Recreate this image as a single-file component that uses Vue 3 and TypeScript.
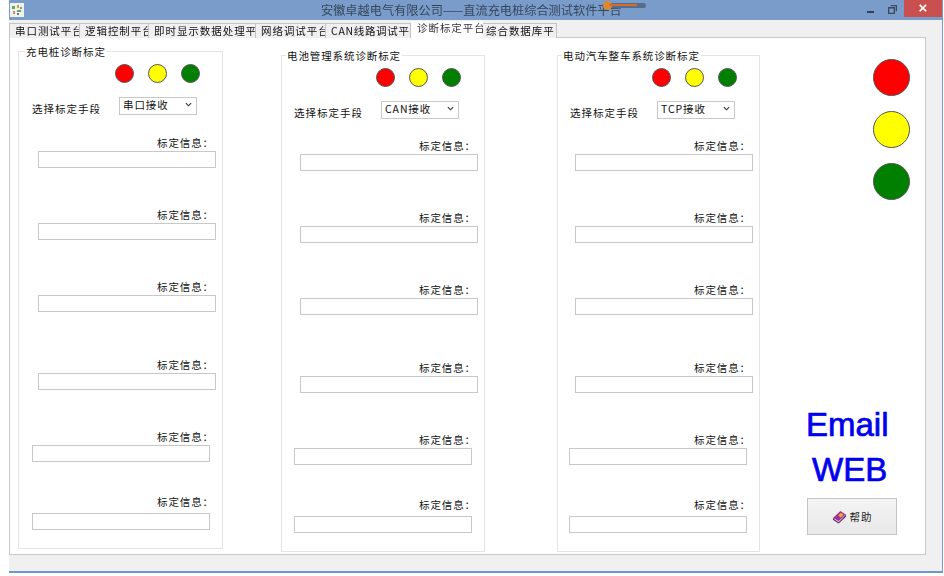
<script setup lang="ts">
interface Panel {
  title: string
  mode: string
  cls: string
}
const tabs = ['串口测试平台', '逻辑控制平台', '即时显示数据处理平台', '网络调试平台', 'CAN线路调试平台', '诊断标定平台', '综合数据库平台']
const panels: Panel[] = [
  { title: '充电桩诊断标定', mode: '串口接收', cls: 'p1' },
  { title: '电池管理系统诊断标定', mode: 'CAN接收', cls: 'p2' },
  { title: '电动汽车整车系统诊断标定', mode: 'TCP接收', cls: 'p3' },
]
const rows = [0, 1, 2, 3, 4, 5]
</script>

<template>
  <div class="page">
    <div class="window">
      <header class="titlebar">
        <svg class="appicon" viewBox="0 0 14 14" width="14" height="14">
          <rect width="14" height="14" fill="#eef3e8" />
          <rect x="2" y="3" width="3" height="3" fill="#6fa06f" />
          <rect x="7" y="2" width="2" height="3" fill="#c9a24a" />
          <rect x="10" y="4" width="2" height="2" fill="#7a93b8" />
          <rect x="3" y="8" width="2" height="3" fill="#c98a6f" />
          <rect x="7" y="7" width="4" height="2" fill="#6fa06f" />
          <rect x="7" y="10" width="2" height="2" fill="#777" />
        </svg>
        <span class="title">安徽卓越电气有限公司——直流充电桩综合测试软件平台</span>
        <div class="slider"><i class="knob"></i><i class="fill"></i></div>
        <div class="controls">
          <svg class="min" viewBox="0 0 7 2" width="7" height="2"><rect width="7" height="2" fill="#35404f" /></svg>
          <svg class="max" viewBox="0 0 10 10" width="9" height="9">
            <path d="M3 .7h6.3V7M.7 3h6.3v6.3H.7z" fill="none" stroke="#3f4a5a" stroke-width="1.5" />
          </svg>
          <div class="close">×</div>
        </div>
      </header>
      <div class="body">
        <nav class="tabs">
          <div v-for="(t, i) in tabs" :key="t" class="tab" :class="['t' + i, { active: i === 5 }]"><span>{{ t }}</span></div>
        </nav>
        <main class="pane">
          <section v-for="p in panels" :key="p.title" class="group" :class="p.cls">
            <div class="legend">{{ p.title }}</div>
            <div class="lights">
              <i class="dot red"></i><i class="dot yellow"></i><i class="dot green"></i>
            </div>
            <div class="mode">
              <span class="mode-label">选择标定手段</span>
              <div class="select"><span>{{ p.mode }}</span>
                <svg viewBox="0 0 8 5" width="7" height="5"><path d="M1 1l3 3 3-3" fill="none" stroke="#333" stroke-width="1.3" /></svg>
              </div>
            </div>
            <div class="rows">
              <div v-for="r in rows" :key="r" class="row" :class="'r' + r">
                <label>标定信息：</label>
                <div class="input"></div>
              </div>
            </div>
          </section>
          <aside class="side">
            <div class="big-lights">
              <i class="big red"></i><i class="big yellow"></i><i class="big green"></i>
            </div>
            <div class="link email">Email</div>
            <div class="link web">WEB</div>
            <button class="help">
              <svg viewBox="0 0 16 16" width="15" height="15">
                <path d="M1 9.5L9 2l6 4-8 7.5z" fill="#a0309c" />
                <path d="M1 9.5l6 4L15 6v2.2L7 15.5l-6-4z" fill="#5c1f6a" />
                <path d="M2.4 10l4.6 3 7-6.6v.6L7 14 2.4 11z" fill="#efe4dc" />
                <path d="M6.5 7l3-3 3 2-3 3z" fill="#eda92f" />
              </svg>
              <span>帮助</span>
            </button>
          </aside>
        </main>
      </div>
    </div>
  </div>
</template>

<style>
html, body { margin: 0; background: #fff; }
</style>

<style scoped>
.page { width: 944px; height: 576px; overflow: hidden; padding: 0 1px 3px 9px; box-sizing: border-box; background: #fff; font-family: "Noto Sans CJK SC", "Liberation Sans", sans-serif; color: #111; }
.window { height: 100%; display: flex; flex-direction: column; background: #f0f0f0; border-bottom: 2px solid #6f97cd; border-right: 1px solid #7a9ccb; box-sizing: border-box; filter: blur(0.4px); }
.titlebar { height: 20px; flex: none; background: #7a9ccb; display: flex; align-items: center; position: relative; }
.appicon { margin-left: 1px; }
.title { position: absolute; left: 312px; top: 2px; font-size: 12.2px; line-height: 16px; color: #36465a; white-space: nowrap; }
.slider { position: absolute; left: 594px; top: 3px; width: 43px; height: 5px; border-radius: 3px; background: #566c8a; }
.knob { position: absolute; left: 0; top: -2px; width: 9px; height: 9px; border-radius: 50%; background: #e0862c; }
.fill { position: absolute; left: 6px; top: 1px; width: 28px; height: 2px; background: #d0702c; }
.controls { margin-left: auto; display: flex; align-items: center; height: 100%; }
.min { margin-right: 14px; margin-top: 3px; }
.max { margin-right: 7px; margin-top: -2px; }
.close { width: 38px; height: 17px; align-self: flex-start; background: #c9504f; color: #fff; text-align: center; font: bold 15px/16px "Liberation Sans", sans-serif; }
.body { flex: 1; min-height: 0; display: flex; flex-direction: column; padding: 1px 16px 16px 0; }
.tabs { display: flex; height: 16px; flex: none; position: relative; z-index: 1; align-items: flex-start; }
.tab { box-sizing: border-box; height: 15px; margin-top: 2px; background: #f0f0f0; border: 1px solid #c4c4c4; border-bottom: 0; border-left-width: 0; font-size: 10.5px; line-height: 13px; letter-spacing: 0.95px; white-space: nowrap; overflow: hidden; padding-left: 5px; color: #111; }
.tab.active { background: #fff; height: 18px; margin-top: 0; border: 0; color: #333; padding-left: 6px; line-height: 14px; }
.t0 { width: 71px; border-left-width: 1px; }
.t1 { width: 69px; }
.t2 { width: 107px; }
.t3 { width: 70px; }
.t4 { width: 85px; letter-spacing: 0.7px; }
.t5 { width: 72px; }
.t6 { width: 74px; padding-left: 3px; }
.pane { flex: 1; min-height: 0; background: #fff; border: 1px solid #c9c9c9; display: flex; align-items: flex-start; position: relative; }
.group { position: relative; box-sizing: border-box; border: 1px solid #e4e4e4; display: flex; flex-direction: column; }
.p1 { width: 205px; height: 498px; margin: 13px 0 0 8px; }
.p2 { width: 204px; height: 497px; margin: 17px 0 0 58px; }
.p3 { width: 203px; height: 497px; margin: 17px 0 0 72px; }
.legend { position: absolute; left: 6px; top: -7px; padding: 0 1px; background: #fff; font-size: 10.5px; line-height: 14px; letter-spacing: 0.9px; white-space: nowrap; color: #111; }
.p2 .legend, .p3 .legend { left: 4px; }
.lights { display: flex; gap: 14px; justify-content: flex-end; margin: 12px 22px 0 0; }
.p2 .lights { margin-right: 23px; }
.dot { display: block; width: 19px; height: 19px; box-sizing: border-box; border-radius: 50%; border: 1px solid #555; }
.red { background: #fe0000; }
.yellow { background: #ffff00; }
.green { background: #007f00; }
.mode { display: flex; align-items: flex-start; margin: 14px 0 0 12px; height: 38px; }
.p1 .mode { margin-left: 13px; height: 39px; }
.mode-label { font-size: 10.5px; letter-spacing: 1px; line-height: 14px; margin-top: 5px; white-space: nowrap; color: #111; }
.select { box-sizing: border-box; width: 78px; height: 18px; margin-left: 18px; border: 1px solid #c8c8c8; background: #fff; display: flex; align-items: center; justify-content: space-between; padding: 0 4px 3px 3px; font-size: 10.5px; line-height: 13px; letter-spacing: .9px; color: #111; }
.p1 .select { margin-left: 18px; }
.rows { display: flex; flex-direction: column; }
.row { display: flex; flex-direction: column; align-items: flex-end; }
.row label { font-size: 10.5px; line-height: 14px; letter-spacing: 0.9px; color: #111; margin-right: 8px; }
.input { box-sizing: border-box; width: 178px; height: 17px; margin: 1px 6px 0 0; border: 1px solid #c8c8c8; background: #fff; }
.r1, .r2, .r4 { margin-top: 40px; }
.r3 { margin-top: 46px; }
.r4 .input, .r5 .input { margin-right: 12px; }
.r5 { margin-top: 33px; }
.r5 .input { margin-top: 4px; }
.side { flex: 1; display: flex; flex-direction: column; align-items: flex-start; }
.big-lights { display: flex; flex-direction: column; gap: 15px; margin: 21px 0 0 113px; }
.big { display: block; width: 37px; height: 37px; box-sizing: border-box; border-radius: 50%; border: 1px solid #555; }
.link { font-family: "Liberation Sans", sans-serif; font-size: 33px; line-height: 36px; color: #0000ee; -webkit-text-stroke: 0.7px #0000ee; }
.email { margin: 207px 0 0 46px; }
.web { margin: 9px 0 0 52px; }
.help { box-sizing: border-box; width: 90px; height: 37px; margin: 10px 0 0 47px; background: linear-gradient(#f4f4f4, #e8e8e8); border: 1px solid #c4c4c4; display: flex; align-items: center; justify-content: center; gap: 3px; font-family: inherit; font-size: 10.5px; letter-spacing: 1px; color: #222; padding: 0; }
</style>
